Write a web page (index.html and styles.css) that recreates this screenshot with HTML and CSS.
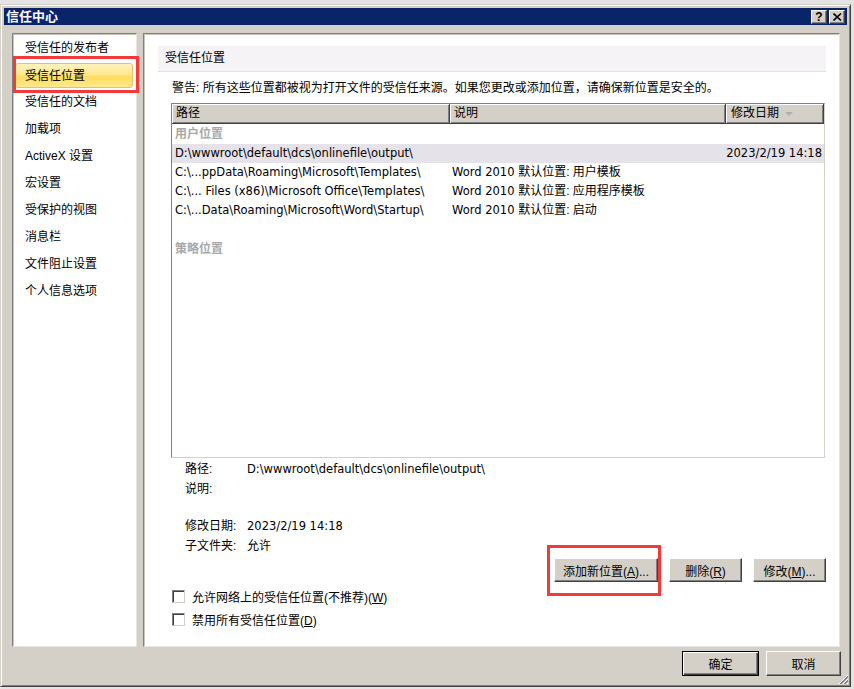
FILE: index.html
```html
<!DOCTYPE html>
<html lang="zh-CN">
<head>
<meta charset="utf-8">
<title>信任中心</title>
<link rel="stylesheet" href="styles.css">
</head>
<body>
<div class="dialog">
  <div class="titlebar">
    <span class="title">信任中心</span>
    <div class="tb-btns">
      <span class="tb-btn">?</span>
      <span class="tb-btn">
        <svg width="9" height="8" viewBox="0 0 9 8"><path d="M0.5 0.5 L8 7.5 M8 0.5 L0.5 7.5" stroke="#000" stroke-width="1.6" fill="none"/></svg>
      </span>
    </div>
  </div>
  <div class="main">
    <nav class="nav">
      <div class="nav-item">受信任的发布者</div>
      <div class="nav-item selected"><span class="hl">受信任位置</span><span class="mark mark-nav"></span></div>
      <div class="nav-item">受信任的文档</div>
      <div class="nav-item">加载项</div>
      <div class="nav-item">ActiveX 设置</div>
      <div class="nav-item">宏设置</div>
      <div class="nav-item">受保护的视图</div>
      <div class="nav-item">消息栏</div>
      <div class="nav-item">文件阻止设置</div>
      <div class="nav-item">个人信息选项</div>
    </nav>
    <section class="panel">
      <div class="panel-head">受信任位置</div>
      <p class="warn">警告: 所有这些位置都被视为打开文件的受信任来源。如果您更改或添加位置，请确保新位置是安全的。</p>
      <div class="list">
        <div class="list-head">
          <div class="hcell c1">路径</div>
          <div class="hcell c2">说明</div>
          <div class="hcell c3">修改日期<span class="sort"></span></div>
          <div class="hcell c4"></div>
        </div>
        <div class="list-body">
          <div class="group">用户位置</div>
          <div class="row sel"><span class="c1 t">D:\wwwroot\default\dcs\onlinefile\output\</span><span class="c2"></span><span class="c3 t">2023/2/19 14:18</span></div>
          <div class="row"><span class="c1 t">C:\...ppData\Roaming\Microsoft\Templates\</span><span class="c2"><span class="t">Word 2010 </span>默认位置: 用户模板</span><span class="c3"></span></div>
          <div class="row"><span class="c1 t">C:\... Files (x86)\Microsoft Office\Templates\</span><span class="c2"><span class="t">Word 2010 </span>默认位置: 应用程序模板</span><span class="c3"></span></div>
          <div class="row"><span class="c1 t">C:\...Data\Roaming\Microsoft\Word\Startup\</span><span class="c2"><span class="t">Word 2010 </span>默认位置: 启动</span><span class="c3"></span></div>
          <div class="row"></div>
          <div class="group">策略位置</div>
        </div>
      </div>
      <div class="details">
        <span class="lbl">路径:</span><span class="val t">D:\wwwroot\default\dcs\onlinefile\output\</span>
        <span class="lbl">说明:</span><span class="val"></span>
        <span class="lbl gap">修改日期:</span><span class="val gap t">2023/2/19 14:18</span>
        <span class="lbl">子文件夹:</span><span class="val">允许</span>
      </div>
      <div class="actions">
        <span class="btn-wrap"><button class="btn btn-add">添加新位置(<u>A</u>)...</button><span class="mark mark-add"></span></span>
        <button class="btn btn-sm">删除(<u>R</u>)</button>
        <button class="btn btn-sm">修改(<u>M</u>)...</button>
      </div>
      <div class="checks">
        <label class="check"><span class="box"></span><span>允许网络上的受信任位置(不推荐)(<u>W</u>)</span></label>
        <label class="check"><span class="box"></span><span>禁用所有受信任位置(<u>D</u>)</span></label>
      </div>
    </section>
  </div>
  <div class="footer">
    <button class="btn btn-foot default">确定</button>
    <button class="btn btn-foot">取消</button>
  </div>
  <svg class="grip" width="11" height="11" viewBox="0 0 11 11">
    <path d="M10 1 L1 10 M10 5 L5 10 M10 9 L9 10" stroke="#fff" stroke-width="1"/>
    <path d="M10 2 L2 10 M10 3 L3 10 M10 6 L6 10 M10 7 L7 10" stroke="#808080" stroke-width="1"/>
  </svg>
</div>
</body>
</html>
```

FILE: styles.css
```css
* { box-sizing: border-box; }
html, body { margin: 0; padding: 0; }
body {
  background: #e4e4e4;
  padding-top: 4px;
  width: 854px;
  height: 689px;
  overflow: hidden;
  font: 12px "Liberation Sans", "Noto Sans CJK SC", sans-serif;
  color: #000;
}
.t {
  font-family: "DejaVu Sans", "Noto Sans CJK SC", sans-serif;
  font-size: 11.5px;
}
.dialog {
  position: relative;
  width: 851px;
  height: 683px;
  background: #d4d0c8;
  border: 1px solid;
  border-color: #d4d0c8 #404040 #404040 #d4d0c8;
  box-shadow: inset 1px 1px #fff, inset -1px -1px #808080;
  padding: 3px;
  display: flex;
  flex-direction: column;
}
.titlebar {
  height: 17px;
  background: #0a246a;
  display: flex;
  align-items: center;
  justify-content: space-between;
  padding: 0 2px 0 2px;
  flex: none;
}
.title {
  color: #fff;
  font-weight: bold;
  font-size: 13px;
  line-height: 17px;
}
.tb-btns { display: flex; gap: 2px; }
.tb-btn {
  width: 16px;
  height: 14px;
  background: #d4d0c8;
  border: 1px solid;
  border-color: #fff #404040 #404040 #fff;
  box-shadow: inset -1px -1px #808080;
  display: flex;
  align-items: center;
  justify-content: center;
  font: bold 12px "Liberation Sans", sans-serif;
  line-height: 12px;
  color: #000;
}
.main {
  display: flex;
  gap: 6px;
  margin-top: 8px;
  padding: 0 7px 0 8px;
  height: 614px;
  flex: none;
}
.nav {
  width: 125px;
  background: #fff;
  border: 1px solid;
  border-color: #808080 #e8e6e2 #e8e6e2 #808080;
  box-shadow: inset 1px 1px #c8c4bc;
  padding-top: 1px;
}
.nav-item {
  position: relative;
  height: 27px;
  line-height: 27px;
  padding-left: 12px;
  white-space: nowrap;
}
.nav-item.selected { padding: 1px 3px 1px 2px; }
.hl {
  display: block;
  height: 25px;
  line-height: 24px;
  padding-left: 9px;
  border: 1px solid #e6c266;
  border-radius: 3px;
  background: linear-gradient(#fff3bd 0%, #ffe88f 45%, #ffdc5e 55%, #ffe98f 100%);
}
.mark {
  position: absolute;
  border: 3px solid #f23a3a;
  pointer-events: none;
}
.mark-nav { left: 0; top: -6px; width: 126px; height: 37px; }
.panel {
  flex: 1;
  background: #fff;
  border: 1px solid;
  border-color: #808080 #e8e6e2 #e8e6e2 #808080;
  box-shadow: inset 1px 1px #c8c4bc;
  padding: 12px 13px 0 14px;
  display: flex;
  flex-direction: column;
}
.panel-head {
  height: 26px;
  line-height: 25px;
  padding-left: 7px;
  background: #f6f3f6;
  border-bottom: 1px solid #e4e0e4;
}
.warn {
  margin: 7px 0 0 14px;
  line-height: 18px;
  height: 18px;
  white-space: nowrap;
}
.list {
  margin: 6px 0 0 13px;
  width: 654px;
  height: 355px;
  border: 1px solid;
  border-color: #808080 #d4d0c8 #d4d0c8 #808080;
  background: #fff;
  overflow: hidden;
}
.list-head {
  display: flex;
  height: 20px;
}
.hcell {
  flex: none;
  height: 20px;
  line-height: 19px;
  background: #d4d0c8;
  border-right: 1px solid #404040;
  border-bottom: 1px solid #404040;
  box-shadow: inset 1px 1px #fff, inset -1px -1px #808080;
  padding-left: 4px;
  white-space: nowrap;
  display: flex;
  align-items: center;
}
.hcell.c1 { width: 278px; }
.hcell.c2 { width: 276px; }
.hcell.c3 { width: 98px; padding-left: 5px; }
.hcell.c4 { flex: 1; border: 0; box-shadow: none; background: #d4d0c8; }
.sort {
  display: inline-block;
  margin-left: 6px;
  width: 0;
  height: 0;
  border-left: 4px solid transparent;
  border-right: 4px solid transparent;
  border-top: 4px solid #b0b0b0;
}
.group {
  height: 20px;
  line-height: 20px;
  padding-left: 3px;
  color: #a8a8a8;
  font-weight: bold;
}
.row {
  display: flex;
  height: 19px;
  line-height: 19px;
  white-space: nowrap;
}
.row.sel { background: #e6e2ea; }
.row .c1 { width: 278px; padding-left: 3px; flex: none; }
.row .c2 { width: 276px; padding-left: 2px; flex: none; }
.row .c3 { width: 97px; text-align: right; padding-right: 1px; flex: none; }
.details {
  display: grid;
  grid-template-columns: 62px 1fr;
  margin: 1px 0 0 27px;
  line-height: 20px;
}
.details .gap { margin-top: 17px; }
.actions {
  display: flex;
  justify-content: flex-end;
  gap: 11px;
  margin-top: 2px;
}
.btn-wrap { position: relative; display: flex; }
.btn {
  height: 24px;
  padding: 0;
  background: #d4d0c8;
  border: 1px solid;
  border-color: #fff #404040 #404040 #fff;
  box-shadow: inset -1px -1px #808080;
  font: 12px "Liberation Sans", "Noto Sans CJK SC", sans-serif;
  color: #000;
}
.btn-add { width: 104px; }
.btn-sm { width: 73px; }
.mark-add { left: -7px; top: -13px; width: 114px; height: 51px; }
.checks {
  margin: 3px 0 0 14px;
}
.check {
  display: flex;
  align-items: center;
  height: 23px;
  gap: 7px;
  white-space: nowrap;
}
.box {
  width: 13px;
  height: 13px;
  background: #fff;
  border: 1px solid;
  border-color: #808080 #d4d0c8 #d4d0c8 #808080;
  box-shadow: inset 1px 1px #404040;
}
.footer {
  display: flex;
  justify-content: flex-end;
  gap: 7px;
  padding: 4px 6px 0 0;
  flex: 1;
}
.btn-foot { width: 75px; height: 25px; }
.btn-foot.default {
  width: 77px;
  border: 1px solid #000;
  box-shadow: inset 1px 1px #fff, inset -1px -1px #404040, inset -2px -2px #808080;
}
.grip { position: absolute; right: 1px; bottom: 1px; }
```
